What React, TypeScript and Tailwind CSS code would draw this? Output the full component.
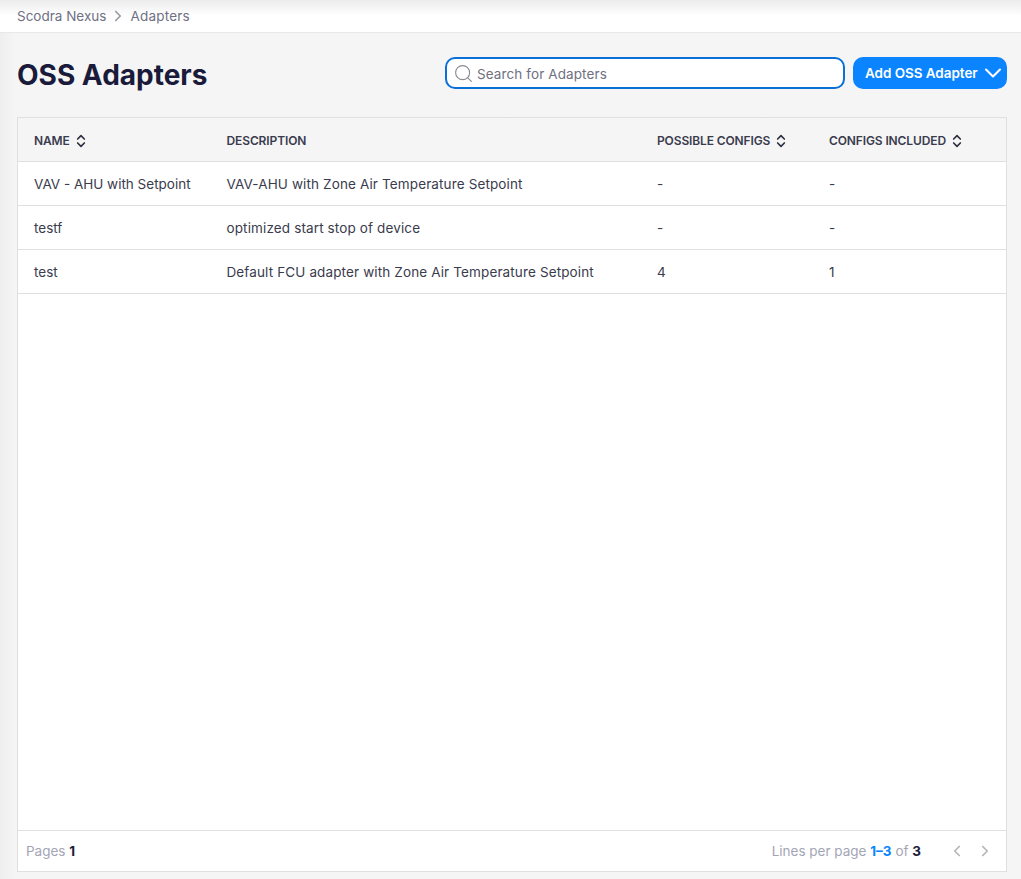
import { ChevronDown, ChevronLeft, ChevronRight, ChevronsUpDown, Search } from "lucide-react";

const rows = [
  { name: "VAV - AHU with Setpoint", description: "VAV-AHU with Zone Air Temperature Setpoint", possible: "-", included: "-" },
  { name: "testf", description: "optimized start stop of device", possible: "-", included: "-" },
  { name: "test", description: "Default FCU adapter with Zone Air Temperature Setpoint", possible: "4", included: "1" },
];

const cols = "grid grid-cols-[192.5px_430.5px_172px_1fr] pl-4 pt-0.5 items-center";

function HeadCell({ label, sort }: { label: string; sort?: boolean }) {
  return (
    <div className="flex items-center text-[12px] font-semibold tracking-[-0.01em] text-[#3a3b4d]">
      <span>{label}</span>
      {sort && <ChevronsUpDown className="ml-[3px] h-4 w-4 text-[#2e2f42]" strokeWidth={2.5} />}
    </div>
  );
}

export default function App() {
  return (
    <div className="flex h-[879px] flex-col overflow-hidden bg-[#f5f5f5] font-['Inter',sans-serif]">
      <div className="flex h-[33px] shrink-0 items-center border-b border-[#e8e8e8] bg-gradient-to-b from-[#ececec] to-white to-50% pl-[17px] text-[13.5px] text-[#6f7082]">
        <span>Scodra Nexus</span>
        <ChevronRight className="mx-[3px] h-[18px] w-[18px] text-[#9a9aa2]" strokeWidth={2.25} />
        <span className="tracking-[0.2px]">Adapters</span>
      </div>

      <div className="flex min-h-0 flex-1 flex-col bg-gradient-to-r from-[#eeeeee] to-[#f5f5f5] to-[14px] pb-[7px] pl-[17px] pr-[14px]">
        <div className="flex h-[84px] shrink-0 items-start justify-between">
          <h1 className="mt-[23px] text-[28px] leading-[38px] font-bold text-[#1a1b3a]">OSS Adapters</h1>
          <div className="mt-6 flex items-center gap-2">
            <div className="flex h-8 w-[400px] items-center rounded-[10px] border-2 border-[#0a6fd6] bg-white pl-1.5">
              <Search className="h-[21px] w-[21px] text-[#8a8a94]" strokeWidth={1.25} />
              <span className="ml-[3px] pt-0.5 text-[13.5px] tracking-[0.1px] text-[#6f7082]">Search for Adapters</span>
            </div>
            <button className="flex h-8 w-[154px] items-center rounded-[10px] bg-[#0a84ff] pl-3 text-[13.5px] font-semibold tracking-[-0.05px] text-white">
              Add OSS Adapter
              <ChevronDown className="ml-px h-7 w-7" strokeWidth={1.75} />
            </button>
          </div>
        </div>

        <div className="flex min-h-0 flex-1 flex-col border border-[#e0e0e0] bg-white">
          <div className={`${cols} h-[44px] shrink-0 border-b border-[#e0e0e0] bg-[#f5f5f5]`}>
            <HeadCell label="NAME" sort />
            <HeadCell label="DESCRIPTION" />
            <HeadCell label="POSSIBLE CONFIGS" sort />
            <HeadCell label="CONFIGS INCLUDED" sort />
          </div>
          <div className="flex-1">
            {rows.map((r) => (
              <div key={r.name} className={`${cols} h-[44px] border-b border-[#e0e0e0] text-[13.5px] text-[#3a3b4d]`}>
                <span>{r.name}</span>
                <span className="tracking-[0.13px]">{r.description}</span>
                <span>{r.possible}</span>
                <span>{r.included}</span>
              </div>
            ))}
          </div>
          <div className="flex h-[41px] shrink-0 items-center justify-between border-t border-[#e0e0e0] pl-2 pr-3 text-[13.5px] text-[#a3a5b5]">
            <div>
              Pages <span className="font-bold text-[#1a1b3a]">1</span>
            </div>
            <div className="flex items-center">
              <span>
                Lines per page <span className="font-bold text-[#0a84ff]">1–3</span> of{" "}
                <span className="font-bold text-[#1a1b3a]">3</span>
              </span>
              <ChevronLeft className="ml-[27px] h-[18px] w-[18px] text-[#b5b5b5]" strokeWidth={2.25} />
              <ChevronRight className="ml-[10px] h-[18px] w-[18px] text-[#b5b5b5]" strokeWidth={2.25} />
            </div>
          </div>
        </div>
      </div>
    </div>
  );
}
